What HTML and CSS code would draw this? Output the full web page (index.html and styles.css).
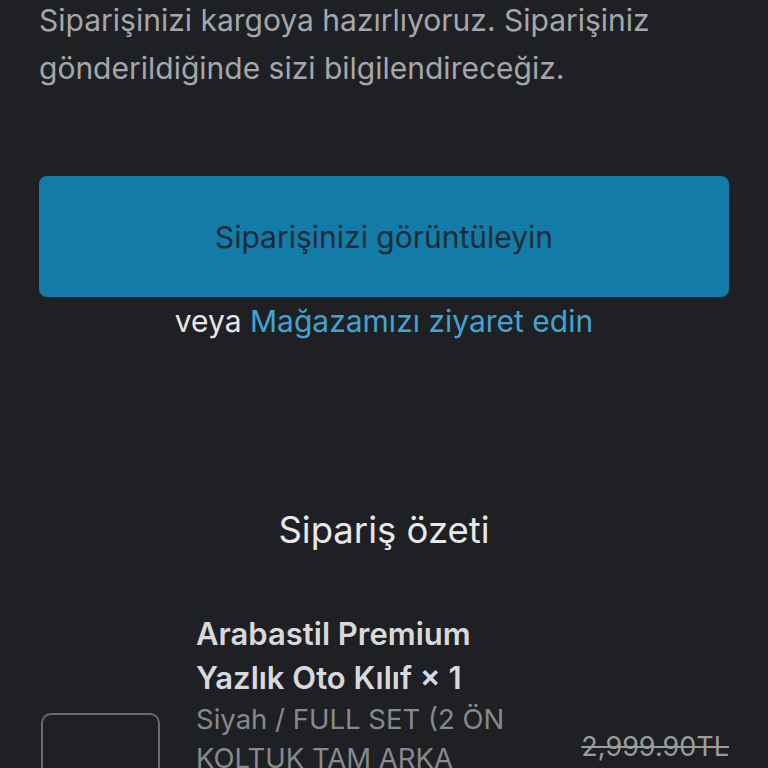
FILE: index.html
```html
<!DOCTYPE html>
<html lang="tr">
<head>
<meta charset="utf-8">
<link rel="stylesheet" href="styles.css">
</head>
<body>
<main class="page">
  <p class="intro">Siparişinizi kargoya hazırlıyoruz. Siparişiniz gönderildiğinde sizi bilgilendireceğiz.</p>
  <a class="btn" href="#">Siparişinizi görüntüleyin</a>
  <p class="alt">veya <a class="link" href="#">Mağazamızı ziyaret edin</a></p>
  <h2 class="summary-title">Sipariş özeti</h2>
  <div class="item">
    <div class="thumb"></div>
    <div class="info">
      <div class="name">Arabastil Premium Yazlık Oto Kılıf × 1</div>
      <div class="variant">Siyah / FULL SET (2 ÖN KOLTUK TAM ARKA</div>
    </div>
    <div class="price">2,999.90TL</div>
  </div>
</main>
</body>
</html>
```

FILE: styles.css
```css
html, body {
  margin: 0;
  padding: 0;
  background: #1f2024;
  height: 100%;
  overflow: hidden;
}
.page {
  font-family: Inter, "Noto Sans", sans-serif;
  padding: 0 39px 0 39px;
}
.intro {
  margin: 0;
  margin-top: -4px;
  font-size: 30px;
  line-height: 48px;
  color: #a6a7aa;
  width: 680px;
}
.btn {
  display: flex;
  align-items: center;
  justify-content: center;
  margin-top: 84px;
  height: 121px;
  border-radius: 8px;
  background: #137ba7;
  color: #1c2a35;
  font-size: 30px;
  text-decoration: none;
}
.alt {
  margin: 6px 0 0;
  text-align: center;
  font-size: 30px;
  line-height: 36px;
  color: #e6e6e8;
}
.link {
  color: #41a5d3;
  text-decoration: none;
}
.summary-title {
  margin: 169px 0 0;
  text-align: center;
  font-size: 36.5px;
  font-weight: 400;
  line-height: 44px;
  color: #e8e8ea;
}
.item {
  display: flex;
  align-items: flex-start;
  margin-top: 60px;
}
.thumb {
  flex: none;
  width: 119px;
  height: 119px;
  margin-top: 101px;
  margin-left: 2px;
  border: 2px solid #6a6b6f;
  border-radius: 10px;
  box-sizing: border-box;
}
.info {
  margin-left: 36px;
  width: 350px;
}
.name {
  font-size: 31px;
  font-weight: 600;
  line-height: 44px;
  color: #d9d9db;
}
.variant {
  font-size: 27.5px;
  line-height: 39px;
  color: #88898c;
}
.price {
  margin-left: auto;
  margin-top: 118px;
  font-size: 27px;
  color: #9b9c9f;
  text-decoration: line-through;
}
```
